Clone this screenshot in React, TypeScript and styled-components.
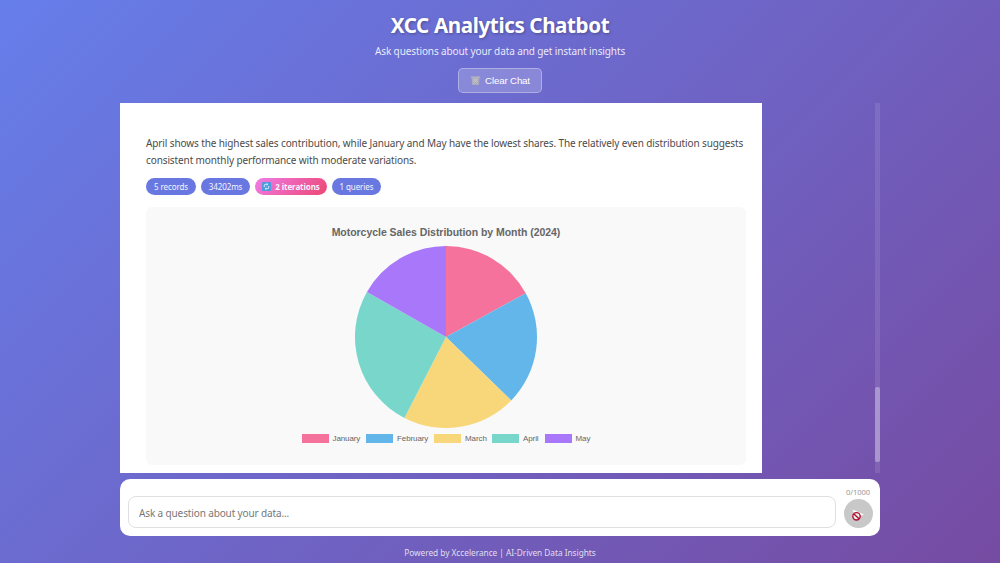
import styled, { createGlobalStyle } from 'styled-components'

const GlobalStyle = createGlobalStyle`
  * {
    box-sizing: border-box;
  }

  body {
    margin: 0;
    overflow: hidden;
    font-family: 'Noto Sans', 'Open Sans', sans-serif;
  }
`

const Page = styled.div`
  display: flex;
  flex-direction: column;
  align-items: center;
  height: 563px;
  background: linear-gradient(135deg, #667eea 0%, #764ba2 100%);
`

const Header = styled.header`
  display: flex;
  flex-direction: column;
  align-items: center;
  height: 103px;
  padding-top: 10px;
  color: #fff;
  white-space: nowrap;
`

const Title = styled.h1`
  margin: 0;
  font-size: 20.6px;
  font-weight: 700;
  line-height: 30px;
  letter-spacing: -0.39px;
  text-shadow: 1px 1px 3px rgba(0, 0, 0, 0.3);
`

const Subtitle = styled.p`
  margin: 3px 0 0;
  font-size: 10px;
  line-height: 16px;
  letter-spacing: -0.11px;
  color: rgba(255, 255, 255, 0.88);
`

const ClearButton = styled.button`
  display: flex;
  align-items: center;
  justify-content: center;
  gap: 4px;
  width: 84px;
  height: 25px;
  margin-top: 9px;
  padding: 0;
  border: 1px solid rgba(255, 255, 255, 0.32);
  border-radius: 5px;
  background: rgba(255, 255, 255, 0.2);
  color: #fff;
  font: 9.7px 'Liberation Sans', sans-serif;
  letter-spacing: -0.15px;
`

const Content = styled.main`
  display: flex;
  justify-content: space-between;
  width: 760px;
  height: 370px;
`

const Message = styled.section`
  width: 642px;
  padding: 32px 16px 0 26px;
  background: #fff;
`

const Answer = styled.p`
  margin: 0;
  font-size: 10px;
  line-height: 17px;
  letter-spacing: -0.11px;
  color: #4b4b4b;
  white-space: nowrap;
`

const Badges = styled.div`
  display: flex;
  gap: 5px;
  margin-top: 9px;
`

const Badge = styled.span<{ $width: number; $highlight?: boolean }>`
  display: flex;
  align-items: center;
  justify-content: center;
  gap: 4px;
  width: ${({ $width }) => $width}px;
  height: 17px;
  border-radius: 9px;
  background: ${({ $highlight }) => ($highlight ? 'linear-gradient(135deg, #f07ce8, #ec4773)' : '#6878e0')};
  color: #f5f5ff;
  font-size: 8px;
  font-weight: ${({ $highlight }) => ($highlight ? 700 : 400)};
  letter-spacing: -0.1px;
  white-space: nowrap;
`

const ChartPanel = styled.div`
  display: flex;
  flex-direction: column;
  align-items: center;
  width: 600px;
  height: 258px;
  margin-top: 12px;
  padding-top: 17px;
  border-radius: 6px;
  background: #f9f9f9;
`

const ChartTitle = styled.h2`
  margin: 0 0 5px;
  color: #666;
  font: bold 10.5px/16px 'Liberation Sans', sans-serif;
  letter-spacing: -0.04px;
`

const Pie = styled.svg`
  display: block;
  width: 184px;
  height: 184px;
`

const Legend = styled.div`
  display: flex;
  gap: 6px;
  margin-top: 4px;
`

const LegendItem = styled.div<{ $color: string; $width: number }>`
  display: flex;
  align-items: center;
  gap: 4px;
  width: ${({ $width }) => $width}px;
  color: #666;
  font: 8px/11px 'Liberation Sans', sans-serif;
  letter-spacing: -0.1px;

  &::before {
    content: '';
    flex: none;
    width: 27px;
    height: 9px;
    background: ${({ $color }) => $color};
  }
`

const ScrollTrack = styled.div`
  width: 5px;
  padding-top: 284px;
  background: rgba(255, 255, 255, 0.1);
`

const ScrollThumb = styled.div`
  height: 75px;
  border-radius: 2px;
  background: rgba(255, 255, 255, 0.32);
`

const Composer = styled.form`
  display: flex;
  gap: 8px;
  width: 760px;
  height: 57px;
  margin-top: 5.5px;
  padding: 0 8px;
  border-radius: 10px;
  background: #fff;
`

const QuestionInput = styled.input`
  width: 708px;
  height: 32px;
  margin: 17.5px 0 0;
  padding: 1px 10px 0;
  border: 1px solid #dfdfe3;
  border-radius: 8px;
  outline: none;
  font: 10px 'Noto Sans', sans-serif;
  letter-spacing: -0.13px;

  &::placeholder {
    color: #777;
    opacity: 1;
  }
`

const SendColumn = styled.div`
  display: flex;
  flex-direction: column;
  align-items: center;
  width: 28px;
  padding-top: 8px;
`

const Counter = styled.span`
  color: #999;
  font-size: 7.6px;
  line-height: 11px;
  letter-spacing: -0.08px;
  white-space: nowrap;
`

const SendButton = styled.button`
  flex: none;
  width: 29px;
  height: 29px;
  margin-top: 1.5px;
  padding: 0;
  border: 0;
  border-radius: 50%;
  background: #c8c8c8;

  svg {
    display: block;
  }
`

const Footer = styled.footer`
  margin-top: 9px;
  color: rgba(255, 255, 255, 0.8);
  font-size: 8.3px;
  line-height: 16px;
  letter-spacing: -0.03px;
`

const months = [
  { name: 'January', color: '#f4729b', start: 0, end: 61.2, width: 58.5 },
  { name: 'February', color: '#62b6e9', start: 61.2, end: 134.2, width: 62 },
  { name: 'March', color: '#f8d77b', start: 134.2, end: 207.2, width: 52 },
  { name: 'April', color: '#78d7ca', start: 207.2, end: 299.7, width: 46.5 },
  { name: 'May', color: '#a978fa', start: 299.7, end: 360, width: 46 },
]

const RADIUS = 91

const point = (degrees: number) => {
  const angle = (degrees * Math.PI) / 180
  return `${92 + RADIUS * Math.sin(angle)} ${92 - RADIUS * Math.cos(angle)}`
}

const TrashIcon = () => (
  <svg width="11" height="11" viewBox="0 0 11 11">
    <path d="M1.4 2.2H9.6L8.8 10H2.2Z" fill="#aaa9b9" />
    <path d="M3 3.5L7.7 9M5 3.2L8.3 7M8 3.5L3.2 9M6 3.2L2.6 7" stroke="#d2d0db" strokeWidth=".6" />
    <path d="M.8 1.4H10.2V2.7H.8Z" fill="#b9b6bd" />
  </svg>
)

const RepeatIcon = () => (
  <svg width="9" height="9" viewBox="0 0 9 9">
    <rect width="9" height="9" rx="1" fill="#4b9bde" />
    <path d="M2.3 5V3.2Q2.3 2.3 3.4 2.3H5.6M4.7 1.2L5.9 2.3L4.7 3.4M6.7 4V5.8Q6.7 6.7 5.6 6.7H3.4M4.3 5.6L3.1 6.7L4.3 7.8" fill="none" stroke="#e7f5ff" strokeWidth=".9" />
  </svg>
)

const SendIcon = () => (
  <svg width="29" height="29" viewBox="0 0 29 29">
    <path d="M8.5 10.5L20 15.5L8.5 20L10.5 15.5Z" fill="#fff" />
    <circle cx="12.5" cy="17.3" r="3.7" fill="#eee" stroke="#b01030" strokeWidth="1.4" />
    <path d="M10 14.9L15 19.7" stroke="#b01030" strokeWidth="1.4" />
  </svg>
)

const App = () => {
  return (
    <Page>
      <GlobalStyle />
      <Header>
        <Title>XCC Analytics Chatbot</Title>
        <Subtitle>Ask questions about your data and get instant insights</Subtitle>
        <ClearButton>
          <TrashIcon />
          Clear Chat
        </ClearButton>
      </Header>
      <Content>
        <Message>
          <Answer>
            April shows the highest sales contribution, while January and May have the lowest shares. The relatively even distribution suggests
            <br />
            consistent monthly performance with moderate variations.
          </Answer>
          <Badges>
            <Badge $width={50}>5 records</Badge>
            <Badge $width={49}>34202ms</Badge>
            <Badge $width={72} $highlight>
              <RepeatIcon />2 iterations
            </Badge>
            <Badge $width={49}>1 queries</Badge>
          </Badges>
          <ChartPanel>
            <ChartTitle>Motorcycle Sales Distribution by Month (2024)</ChartTitle>
            <Pie viewBox="0 0 184 184">
              {months.map(({ name, color, start, end }) => (
                <path key={name} d={`M92 92L${point(start)}A${RADIUS} ${RADIUS} 0 0 1 ${point(end)}Z`} fill={color} />
              ))}
            </Pie>
            <Legend>
              {months.map(({ name, color, width }) => (
                <LegendItem key={name} $color={color} $width={width}>
                  {name}
                </LegendItem>
              ))}
            </Legend>
          </ChartPanel>
        </Message>
        <ScrollTrack>
          <ScrollThumb />
        </ScrollTrack>
      </Content>
      <Composer>
        <QuestionInput placeholder="Ask a question about your data..." />
        <SendColumn>
          <Counter>0/1000</Counter>
          <SendButton type="button" aria-label="Send">
            <SendIcon />
          </SendButton>
        </SendColumn>
      </Composer>
      <Footer>Powered by Xccelerance | AI-Driven Data Insights</Footer>
    </Page>
  )
}

export default App
